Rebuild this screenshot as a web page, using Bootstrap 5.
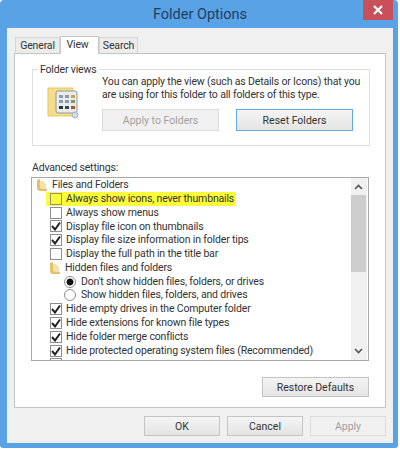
<!DOCTYPE html>
<html lang="en">
<head>
    <meta charset="UTF-8">
    <title>Folder Options</title>
    <link rel="stylesheet" href="https://cdn.jsdelivr.net/npm/bootstrap@5.3.0/dist/css/bootstrap.min.css">
    <style>
        body { background: #fff; font-family: Roboto, "Liberation Sans", Arial, sans-serif; font-size: 10.5px; letter-spacing: -0.16px; color: #333; margin: 0; }
        .dlg-window { width: 398px; height: 448px; background: #5aa2e6; padding: 0 5px 5px 7px; position: relative; border-radius: 4px 4px 3px 3px; }
        .dlg-title { height: 28px; line-height: 29px; font-size: 14.5px; letter-spacing: 0; color: #1d4061; }
        .dlg-close { position: absolute; top: 0; right: 5px; width: 30px; height: 20px; background: #c9505a; }
        .dlg-body { background: #f0f0f0; height: 415px; padding: 8px 7px 0 7px; }
        .dlg-tabs { height: 17px; padding-left: 1px; border: 0; flex-wrap: nowrap; align-items: flex-end; }
        .dlg-tab { width: 45px; height: 16px; line-height: 15px; text-align: center; border: 1px solid #d6d6d6; border-bottom: 0; background: #ececec; color: #333; }
        .dlg-tab.is-on { width: 39px; height: 18px; line-height: 15px; background: #fff; border-color: #c8c8c8; margin-bottom: -1px; position: relative; padding-right: 4px; z-index: 1; }
        .dlg-tab.is-last { width: 39px; }
        .dlg-panel { width: 372px; height: 355px; background: #fff; border: 1px solid #c4c4c4; padding: 15px 15px 0 17px; }
        .dlg-group { height: 77px; border: 1px solid #dedede; position: relative; padding: 6px 0 0 69px; width: 338px; }
        .dlg-legend { position: absolute; top: -7px; left: 5px; background: #fff; padding: 0 2px; line-height: 14px; }
        .dlg-group-icon { position: absolute; left: 14px; top: 15px; }
        .dlg-group-text { line-height: 12.5px; white-space: nowrap; }
        .dlg-btn { border: 1px solid #c4c4c4; border-radius: 0; background: linear-gradient(#f4f4f4, #e4e4e4); color: #333; font-size: 10.5px; padding: 0; height: 20px; line-height: 17px; }
        .dlg-btn-wide { width: 117px; height: 22px; }
        .dlg-btn.is-off { background: #f0f0f0; border-color: #dcdcdc; color: #a0a0a0; opacity: 1; }
        .dlg-btn.is-focus { border-color: #66a7dc; margin-left: 17px; }
        .dlg-btn-restore { width: 107px; margin: 16px 1px 0 0; }
        .dlg-btn-foot { width: 76px; }
        .dlg-label { height: 17px; line-height: 16px; margin-top: 14px; }
        .dlg-list { width: 338px; height: 184px; border: 1px solid #a8a8a8; margin-left: -1px; position: relative; padding: 0 0 0 5px; overflow: hidden; background: #fff; }
        .dlg-row { height: 13.8px; line-height: 14px; white-space: nowrap; }
        .dlg-row.is-mark { background: #fcfc3a; margin-left: 9px; width: 190px; height: 14px; }
        .dlg-indent { padding-left: 13px; }
        .dlg-row.is-mark.dlg-indent { padding-left: 4px; }
        .dlg-indent2 { padding-left: 27px; }
        .dlg-box { width: 12px; height: 12px; border: 1px solid #8e8e8e; background: #fff; margin-right: 4px; flex: none; }
        .is-mark .dlg-box { background: transparent; }
        .dlg-radio { width: 12px; height: 12px; border: 1px solid #8e8e8e; border-radius: 50%; background: #fff; margin-right: 5px; flex: none; }
        .dlg-radio.is-on { background: radial-gradient(circle, #111 3.2px, #fff 3.8px); }
        .dlg-folder { margin-right: 5px; flex: none; }
        .dlg-scroll { position: absolute; top: 0; right: 1px; bottom: 0; width: 16px; background: #f0f0f0; }
        .dlg-thumb { position: absolute; top: 17px; left: 0; right: 1px; height: 77px; background: #cdcdcd; }
        .dlg-arrow { position: absolute; left: 3px; }
        .dlg-foot { margin-top: 8px; width: 372px; gap: 7px; }
    </style>
</head>
<body>
    <div class="dlg-window">
        <div class="dlg-title text-center">Folder Options</div>
        <div class="dlg-close d-flex align-items-center justify-content-center">
            <svg width="10" height="10" viewBox="0 0 10 10"><path d="M1 1L9 9M9 1L1 9" stroke="#fff" stroke-width="2.2"/></svg>
        </div>
        <div class="dlg-body">
            <ul class="nav dlg-tabs">
                <li class="dlg-tab">General</li>
                <li class="dlg-tab is-on">View</li>
                <li class="dlg-tab is-last">Search</li>
            </ul>
            <div class="dlg-panel">
                <div class="dlg-group">
                    <div class="dlg-legend">Folder views</div>
                    <svg class="dlg-group-icon" width="34" height="34" viewBox="0 0 34 34">
                        <path d="M1 3H26V31H1Z" fill="#f5dc8c" stroke="#e6c766"/>
                        <rect x="9" y="6" width="21" height="22" rx="2" fill="#e9ecec" stroke="#8f9a9a"/>
                        <g fill="#8a9aa8">
                            <rect x="12" y="10" width="4" height="3"/><rect x="18" y="10" width="4" height="3"/><rect x="24" y="10" width="4" height="3" fill="#c9a24a"/>
                            <rect x="12" y="15" width="4" height="3"/><rect x="18" y="15" width="4" height="3"/><rect x="24" y="15" width="4" height="3" fill="#7d9a55"/>
                            <rect x="12" y="21" width="4" height="3" fill="#333"/><rect x="18" y="21" width="4" height="3" fill="#445"/><rect x="24" y="21" width="4" height="3" fill="#a8562e"/>
                        </g>
                        <circle cx="28" cy="30" r="3" fill="#cfdcea" stroke="#9fb3c8"/>
                    </svg>
                    <div class="dlg-group-text">You can apply the view (such as Details or Icons) that you<br>are using for this folder to all folders of this type.</div>
                    <div class="d-flex mt-2">
                        <button class="btn dlg-btn dlg-btn-wide is-off" disabled>Apply to Folders</button>
                        <button class="btn dlg-btn dlg-btn-wide is-focus">Reset Folders</button>
                    </div>
                </div>
                <div class="dlg-label">Advanced settings:</div>
                <div class="dlg-list" id="settingsList">
                    <div class="dlg-scroll" id="settingsScroll">
                        <svg class="dlg-arrow" style="top:6px" width="9" height="6" viewBox="0 0 9 6"><path d="M1 5L4.5 1.5L8 5" fill="none" stroke="#555" stroke-width="1.6"/></svg>
                        <div class="dlg-thumb"></div>
                        <svg class="dlg-arrow" style="bottom:6px" width="9" height="6" viewBox="0 0 9 6"><path d="M1 1L4.5 4.5L8 1" fill="none" stroke="#555" stroke-width="1.6"/></svg>
                    </div>
                </div>
                <div class="d-flex justify-content-end">
                    <button class="btn dlg-btn dlg-btn-restore">Restore Defaults</button>
                </div>
            </div>
            <div class="d-flex justify-content-end dlg-foot">
                <button class="btn dlg-btn dlg-btn-foot">OK</button>
                <button class="btn dlg-btn dlg-btn-foot">Cancel</button>
                <button class="btn dlg-btn dlg-btn-foot is-off" disabled>Apply</button>
            </div>
        </div>
    </div>
    <script>
        const filas = [
            ['folder', 'Files and Folders', 0],
            ['mark', 'Always show icons, never thumbnails', 1],
            ['box', 'Always show menus', 1],
            ['check', 'Display file icon on thumbnails', 1],
            ['check', 'Display file size information in folder tips', 1],
            ['box', 'Display the full path in the title bar', 1],
            ['folder', 'Hidden files and folders', 1],
            ['radioOn', "Don't show hidden files, folders, or drives", 2],
            ['radio', 'Show hidden files, folders, and drives', 2],
            ['check', 'Hide empty drives in the Computer folder', 1],
            ['check', 'Hide extensions for known file types', 1],
            ['check', 'Hide folder merge conflicts', 1],
            ['check', 'Hide protected operating system files (Recommended)', 1],
            ['box', '', 1]
        ];
        const carpeta = '<svg class="dlg-folder" width="10" height="12" viewBox="0 0 10 12"><path d="M0 1L3 0V9L10 10V12H2L0 10Z" fill="#e3c06a"/><path d="M3 2H6L9 5V10L3 9Z" fill="#f4e2a4"/></svg>';
        const tilde = '<svg width="10" height="10" viewBox="0 0 10 10" class="d-block"><path d="M1 5L4 8.5L9 1.5" fill="none" stroke="#222" stroke-width="2"/></svg>';
        const lista = document.getElementById('settingsList');
        const barra = document.getElementById('settingsScroll');
        filas.forEach(f => {
            const fila = document.createElement('div');
            fila.className = 'dlg-row d-flex align-items-center' + (f[2] === 1 ? ' dlg-indent' : f[2] === 2 ? ' dlg-indent2' : '') + (f[0] === 'mark' ? ' is-mark' : '');
            let marca = '';
            if (f[0] === 'folder') marca = carpeta;
            if (f[0] === 'box' || f[0] === 'mark') marca = '<span class="dlg-box"></span>';
            if (f[0] === 'check') marca = '<span class="dlg-box">' + tilde + '</span>';
            if (f[0] === 'radio') marca = '<span class="dlg-radio"></span>';
            if (f[0] === 'radioOn') marca = '<span class="dlg-radio is-on"></span>';
            fila.innerHTML = marca + '<span>' + f[1] + '</span>';
            lista.insertBefore(fila, barra);
        });
    </script>
</body>
</html>
